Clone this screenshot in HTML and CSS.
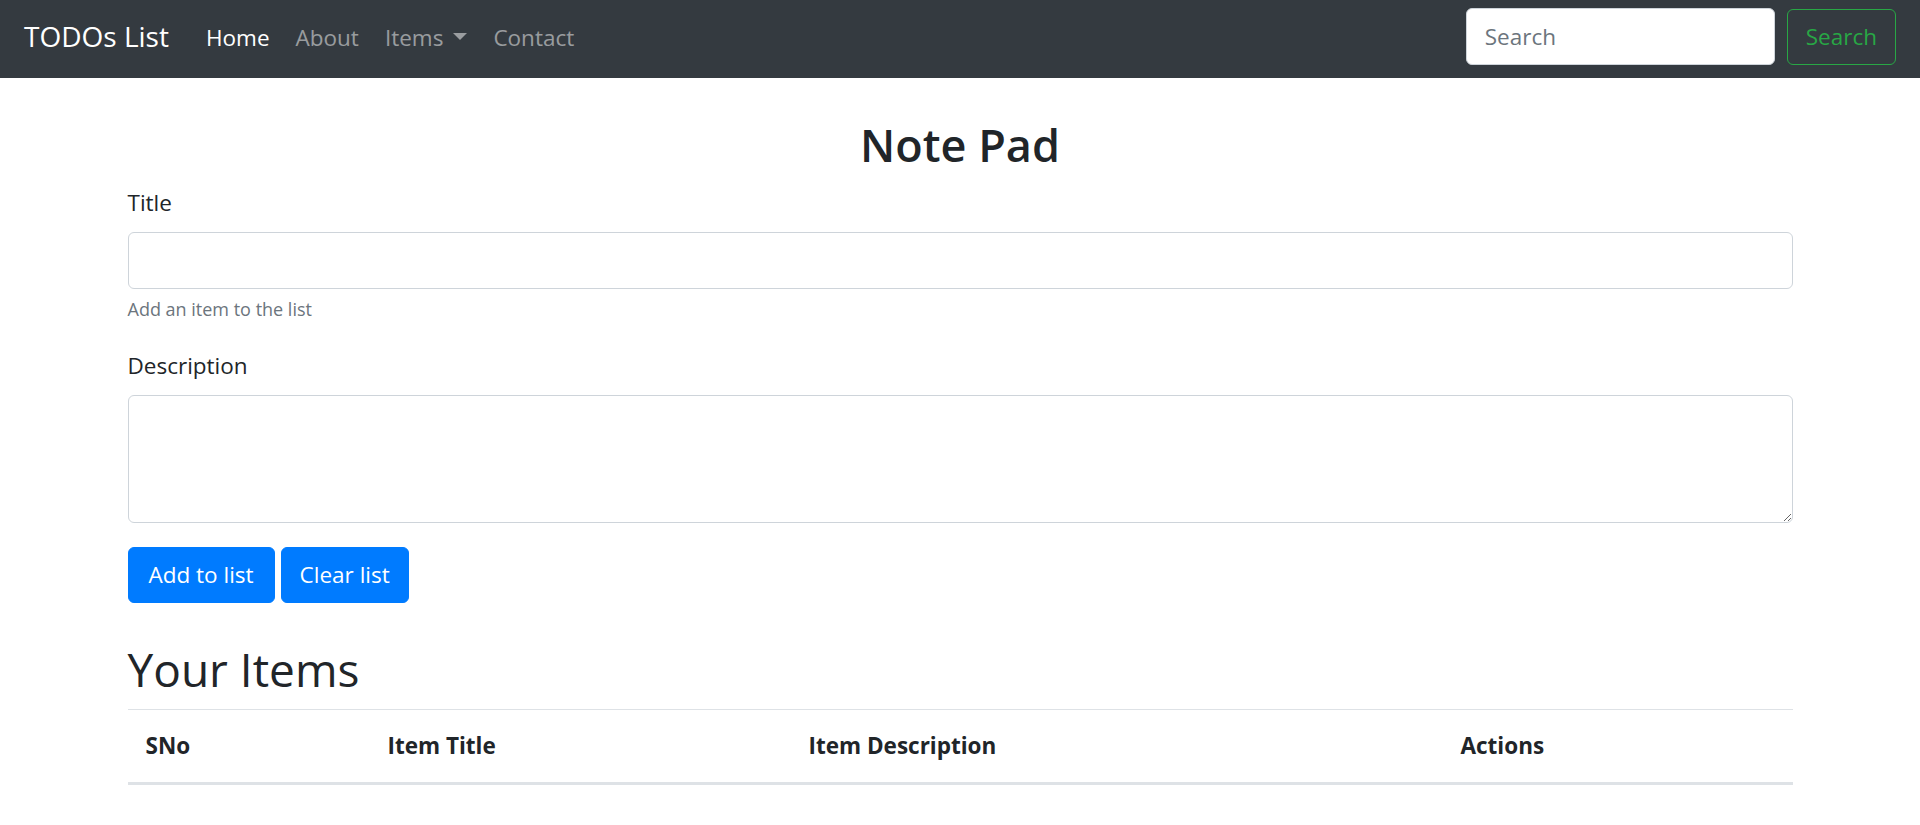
FILE: index.html
```html
<!DOCTYPE html>
<html lang="en">
<head>
<meta charset="utf-8">
<title>TODOs List</title>
<link rel="stylesheet" href="styles.css">
</head>
<body>
<nav class="navbar">
  <a class="brand" href="#">TODOs List</a>
  <ul class="nav">
    <li><a class="nav-link active" href="#">Home</a></li>
    <li><a class="nav-link" href="#">About</a></li>
    <li><a class="nav-link dropdown-toggle" href="#">Items</a></li>
    <li><a class="nav-link" href="#">Contact</a></li>
  </ul>
  <form class="search-form">
    <input class="search-input" type="search" placeholder="Search">
    <button class="btn btn-outline" type="button">Search</button>
  </form>
</nav>

<div class="container">
  <h2 class="page-title">Note Pad</h2>
  <div class="form-group">
    <label class="label" for="title">Title</label>
    <input class="form-control" id="title" type="text">
    <small class="form-text">Add an item to the list</small>
  </div>
  <div class="form-group">
    <label class="label" for="description">Description</label>
    <textarea class="form-control textarea" id="description" rows="3"></textarea>
  </div>
  <div class="actions">
    <button class="btn btn-primary btn-add" type="button">Add to list</button>
    <button class="btn btn-primary" type="button">Clear list</button>
  </div>
</div>

<div class="container items">
  <h2 class="items-title">Your Items</h2>
  <table class="table">
    <thead>
      <tr>
        <th class="th-sno">SNo</th>
        <th class="th-title">Item Title</th>
        <th class="th-desc">Item Description</th>
        <th class="th-actions">Actions</th>
      </tr>
    </thead>
    <tbody></tbody>
  </table>
</div>
</body>
</html>
```

FILE: styles.css
```css
* {
  box-sizing: border-box;
}

body {
  margin: 0;
  font-family: "Open Sans", "Noto Sans", sans-serif;
  font-size: 22.5px;
  line-height: 36px;
  color: #212529;
  background: #fff;
}

/* Navbar */
.navbar {
  display: flex;
  align-items: center;
  height: 78px;
  padding: 8px 24px 13px;
  background: #343a40;
}

.brand {
  font-size: 28px;
  line-height: 45px;
  color: #fff;
  text-decoration: none;
  margin-right: 24px;
  white-space: nowrap;
}

.nav {
  display: flex;
  list-style: none;
  margin: 0;
  padding: 0;
  flex: 1;
}

.nav-link {
  display: block;
  padding: 7px 13px 5px;
  color: rgba(255, 255, 255, 0.5);
  text-decoration: none;
  white-space: nowrap;
}

.nav-link.active {
  color: #fff;
}

.dropdown-toggle::after {
  content: "";
  display: inline-block;
  margin-left: 10px;
  vertical-align: 6px;
  border-top: 7px solid;
  border-right: 7px solid transparent;
  border-left: 7px solid transparent;
  border-bottom: 0;
}

.search-form {
  display: flex;
  align-items: center;
}

.search-input {
  width: 309px;
  height: 57px;
  padding: 9px 18px;
  margin: 0 12px 0 0;
  border: 1px solid #ced4da;
  border-radius: 6px;
  font-family: inherit;
  font-size: 22.5px;
  line-height: 36px;
  color: #495057;
  background: #fff;
}

.search-input::placeholder {
  color: #6c757d;
}

/* Buttons */
.btn {
  height: 56px;
  padding: 9px 18px;
  border: 1px solid transparent;
  border-radius: 6px;
  font-family: inherit;
  font-size: 22.5px;
  line-height: 36px;
  cursor: pointer;
  vertical-align: middle;
}

.btn-add {
  padding: 9px 20px;
}

.btn-outline {
  color: #28a745;
  border-color: #28a745;
  background: transparent;
}

.btn-primary {
  color: #fff;
  background: #007bff;
  border-color: #007bff;
}

/* Layout */
.container {
  max-width: 1710px;
  padding: 0 22.5px;
  margin: 36px auto;
}

.page-title {
  margin: 0 0 10px;
  padding-top: 2px;
  font-size: 45px;
  line-height: 57.6px;
  font-weight: 600;
  text-align: center;
}

.items-title {
  margin: 0 0 10px;
  padding-top: 2px;
  font-size: 46px;
  line-height: 57.6px;
  font-weight: 400;
}

.form-group {
  margin-bottom: 24px;
}

.label {
  display: block;
  margin-bottom: 12px;
  padding-top: 1px;
  height: 36px;
}

.form-control {
  display: block;
  width: 100%;
  height: 57px;
  padding: 9px 18px;
  border: 1px solid #ced4da;
  border-radius: 6px;
  font-family: inherit;
  font-size: 22.5px;
  line-height: 36px;
  color: #495057;
  background: #fff;
  margin: 0;
}

.textarea {
  height: 128px;
  resize: vertical;
}

.form-text {
  display: block;
  margin-top: 6px;
  font-size: 18px;
  line-height: 28.8px;
  color: #6c757d;
}

.actions {
  display: flex;
  gap: 6px;
}

.items {
  margin-top: 35px;
}

/* Table */
.table {
  width: 100%;
  table-layout: fixed;
  border-collapse: collapse;
  margin-bottom: 24px;
}

.table th {
  padding: 18px;
  text-align: left;
  font-weight: 700;
  line-height: 36px;
  border-top: 1px solid #dee2e6;
  border-bottom: 3px solid #dee2e6;
  vertical-align: bottom;
}

.th-sno { width: 242px; }
.th-title { width: 421px; }
.th-desc { width: 652px; }
.th-actions { width: auto; }
```
